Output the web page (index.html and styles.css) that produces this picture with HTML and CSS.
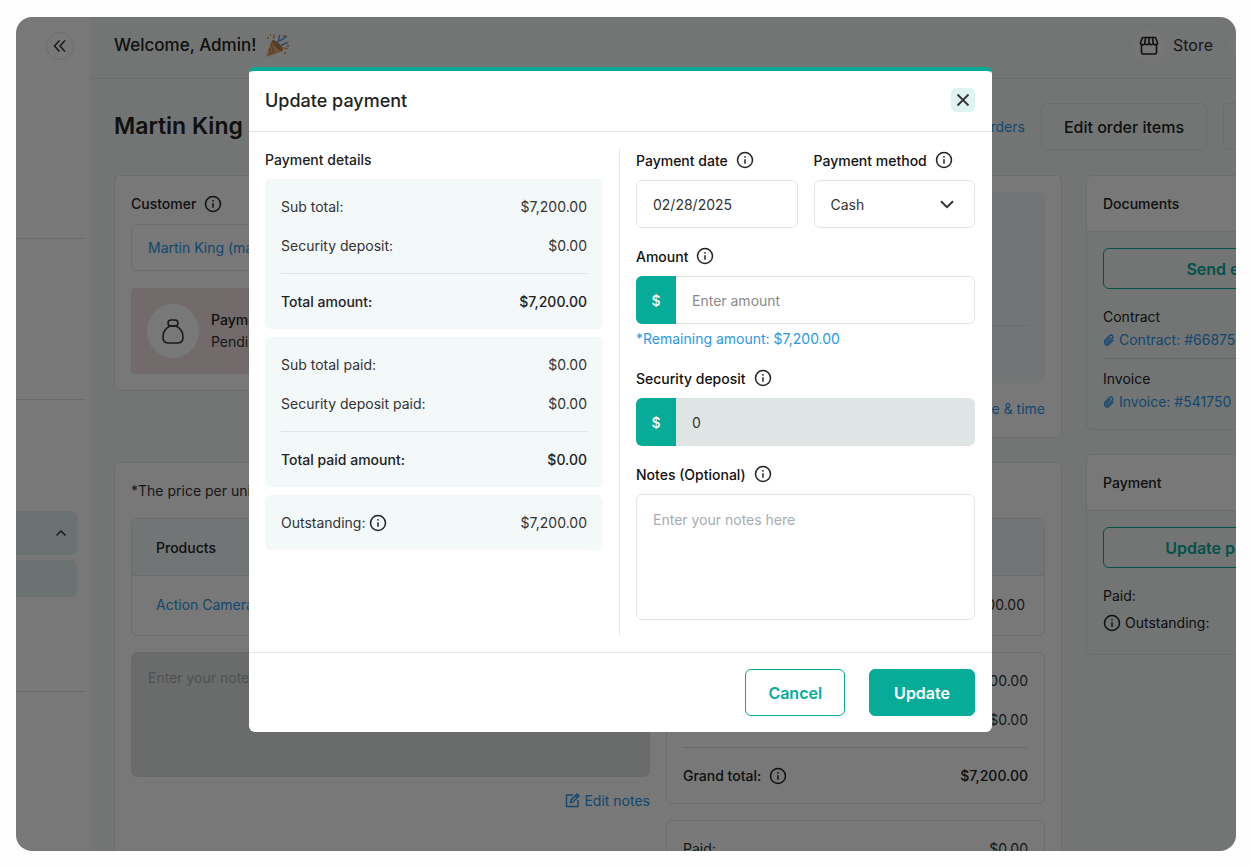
FILE: index.html
```
<!DOCTYPE html>
<html lang="en">
<head>
	<meta charset="UTF-8">
	<title>Update payment</title>
	<link rel="stylesheet" href="styles.css">
</head>
<body>
	<!-- shared icons -->
	<svg class="sprite" aria-hidden="true">
		<symbol id="info" viewBox="0 0 24 24">
			<circle cx="12" cy="12" r="10" fill="none" stroke="currentColor" stroke-width="2"/>
			<path d="M12 11v6" fill="none" stroke="currentColor" stroke-width="2"/>
			<circle cx="12" cy="7.8" r="1.2" fill="currentColor"/>
		</symbol>
		<symbol id="clip" viewBox="0 0 24 24">
			<path d="M21 11.5l-8.6 8.6a5.6 5.6 0 0 1-8-8l9-9a3.9 3.9 0 0 1 5.500 5.500l-8.800 8.800a2 2 0 0 1-2.900-2.900l8-8" fill="none" stroke="currentColor" stroke-width="2.600"/>
		</symbol>
	</svg>

	<div class="app">
		<aside class="sidebar">
			<div class="side-top">
				<button type="button" class="collapse" aria-label="Collapse menu">
					<svg width="14" height="14" viewBox="0 0 14 14"><path d="M6.500 1.500L1.500 7l5 5.500M12 1.500L7 7l5 5.500" fill="none" stroke="currentColor" stroke-width="1.500"/></svg>
				</button>
			</div>
			<div class="side-group"></div>
			<div class="side-group last">
				<a href="#" class="side-item open" aria-label="Orders">
					<svg width="12" height="8" viewBox="0 0 12 8"><path d="M1.500 6.500L6 2l4.500 4.500" fill="none" stroke="currentColor" stroke-width="1.500"/></svg>
				</a>
				<a href="#" class="side-item" aria-label="All orders"></a>
			</div>
		</aside>

		<div class="main">
			<header class="topbar">
				<span class="welcome">Welcome, Admin!</span>
				<svg width="26" height="26" viewBox="0 0 26 26">
					<path d="M8 7l11 11L2 24z" fill="#e8b07a"/>
					<path d="M7 10l3 11M5 15l2 7" stroke="#c48a52" stroke-width="1.500" fill="none"/>
					<ellipse cx="13.500" cy="12.500" rx="2.500" ry="7.500" transform="rotate(-45 13.500 12.500)" fill="#b98250"/>
					<path d="M13 10c3-2 1-5 3-8M17 13c2-3 4-1 7-4M14 8c4 0 5-3 9-5" stroke="#5b9fd6" stroke-width="1.500" fill="none"/>
					<path d="M17 15c3-1 4 2 7 0M10 6c-1-2 1-3 0-5" stroke="#e0a064" stroke-width="1.500" fill="none"/>
					<path d="M3 4h2v2H3zM19 2h2v2h-2zM23 12h2v2h-2zM20 19h2v2h-2zM6 1h1v2H6z" fill="#e0a064"/>
				</svg>
				<div class="store">
					<span class="round">
						<svg width="20" height="20" viewBox="0 0 20 20" fill="none" stroke="#222" stroke-width="1.600" stroke-linejoin="round">
							<path d="M2.500 8.500v8a1.500 1.500 0 0 0 1.500 1.500h12a1.500 1.500 0 0 0 1.500-1.500v-8M3.500 1.500h13l2 5a2.100 2.100 0 0 1-4.200.500a2.200 2.200 0 0 1-4.300 0a2.200 2.200 0 0 1-4.300 0A2.100 2.100 0 0 1 1.500 6.500zM6.700 1.500l-1 5.500M10 1.500V7M13.300 1.500l1 5.500"/>
						</svg>
					</span>
					Store
				</div>
				<span class="round"></span>
			</header>

			<div class="content">
				<div class="title-row">
					<h1>Martin King</h1>
					<a href="#" class="back">Back to orders</a>
					<button type="button" class="btn-plain">Edit order items</button>
					<button type="button" class="btn-plain more" aria-label="More"></button>
				</div>

				<div class="columns">
					<div class="left">
						<div class="cards">
							<section class="card customer">
								<h2>Customer <svg class="icon"><use href="#info"/></svg></h2>
								<a href="#" class="person">Martin King (martin)</a>
								<div class="status">
									<span class="status-icon">
										<svg width="24" height="28" viewBox="0 0 24 28" fill="none" stroke="#333" stroke-width="1.600">
											<rect x="7" y="3" width="10" height="6" rx="3"/>
											<path d="M9 9C5 11 2 15 2 20c0 4 2 6 5 6h10c3 0 5-2 5-6c0-5-3-9-7-11z"/>
										</svg>
									</span>
									<div><b>Payment</b><br>Pending</div>
								</div>
							</section>
							<section class="card dates">
								<div class="panel"><div class="panel-line"></div></div>
								<a href="#">Edit date &amp; time</a>
							</section>
						</div>

						<section class="card order">
							<p class="price-note">*The price per unit</p>
							<table>
								<thead><tr><th>Products</th><th></th></tr></thead>
								<tbody><tr><td><a href="#">Action Camera</a></td><td class="num">$7,200.00</td></tr></tbody>
							</table>
							<div class="bottom">
								<div class="notes-col">
									<textarea class="order-notes" aria-label="Order notes" placeholder="Enter your notes here" disabled></textarea>
									<a href="#" class="edit-notes">
										<svg width="15" height="15" viewBox="0 0 15 15" fill="none" stroke="currentColor" stroke-width="1.400"><path d="M8 2H1.500v11.500H13V7M5.500 9.500l.600-2.600L12 1l2 2-5.900 5.900zM10.500 2.500l2 2"/></svg>
										Edit notes
									</a>
								</div>
								<div class="totals-col">
									<div class="totals">
										<div class="row"><span>Sub total:</span><span>$7,200.00</span></div>
										<div class="row"><span>Security deposit:</span><span>$0.00</span></div>
										<div class="row total strong"><span>Grand total: <svg class="icon"><use href="#info"/></svg></span><span>$7,200.00</span></div>
									</div>
									<div class="totals">
										<div class="row"><span>Paid:</span><span>$0.00</span></div>
									</div>
								</div>
							</div>
						</section>
					</div>

					<div class="right">
						<section class="side-card">
							<h2>Documents</h2>
							<div class="side-body">
								<button type="button" class="btn-outline small">Send email</button>
								<div class="doc">
									<p>Contract</p>
									<a href="#"><svg class="clip"><use href="#clip"/></svg>Contract: #668756</a>
								</div>
								<div class="doc">
									<p>Invoice</p>
									<a href="#"><svg class="clip"><use href="#clip"/></svg>Invoice: #541750</a>
								</div>
							</div>
						</section>
						<section class="side-card">
							<h2>Payment</h2>
							<div class="side-body">
								<button type="button" class="btn-outline small">Update payment</button>
								<div class="paid">
									<p>Paid:</p>
									<p class="out"><svg class="icon"><use href="#info"/></svg>Outstanding:</p>
								</div>
							</div>
						</section>
					</div>
				</div>
			</div>
		</div>

		<div class="overlay">
			<form class="modal" role="dialog" aria-labelledby="modal-title">
				<div class="modal-head">
					<h2 id="modal-title">Update payment</h2>
					<button type="button" class="close" aria-label="Close">
						<svg width="14" height="14" viewBox="0 0 14 14"><path d="M1.500 1.500l11 11M12.500 1.500l-11 11" stroke="currentColor" stroke-width="1.800"/></svg>
					</button>
				</div>
				<div class="modal-body">
					<div class="details">
						<h3>Payment details</h3>
						<div class="box">
							<div class="row"><span>Sub total:</span><span>$7,200.00</span></div>
							<div class="row"><span>Security deposit:</span><span>$0.00</span></div>
							<div class="row total"><span>Total amount:</span><span>$7,200.00</span></div>
						</div>
						<div class="box">
							<div class="row"><span>Sub total paid:</span><span>$0.00</span></div>
							<div class="row"><span>Security deposit paid:</span><span>$0.00</span></div>
							<div class="row total"><span>Total paid amount:</span><span>$0.00</span></div>
						</div>
						<div class="box">
							<div class="row"><span class="tight">Outstanding: <svg class="icon"><use href="#info"/></svg></span><span>$7,200.00</span></div>
						</div>
					</div>
					<div class="fields">
						<div class="two">
							<div class="field">
								<label for="pdate">Payment date <svg class="icon"><use href="#info"/></svg></label>
								<input type="text" id="pdate" value="02/28/2025">
							</div>
							<div class="field">
								<label for="pmethod">Payment method <svg class="icon"><use href="#info"/></svg></label>
								<div class="select">
									<select id="pmethod"><option>Cash</option></select>
									<svg class="arrow" width="14" height="9" viewBox="0 0 14 9"><path d="M1 1.200l6 6 6-6" fill="none" stroke="currentColor" stroke-width="2"/></svg>
								</div>
							</div>
						</div>
						<div class="field">
							<label for="amount">Amount <svg class="icon"><use href="#info"/></svg></label>
							<div class="money"><span>$</span><input type="text" id="amount" placeholder="Enter amount"></div>
							<p class="hint">*Remaining amount: $7,200.00</p>
						</div>
						<div class="field">
							<label for="deposit">Security deposit <svg class="icon"><use href="#info"/></svg></label>
							<div class="money"><span>$</span><input type="text" id="deposit" value="0" disabled></div>
						</div>
						<div class="field">
							<label for="notes">Notes (Optional) <svg class="icon"><use href="#info"/></svg></label>
							<textarea id="notes" placeholder="Enter your notes here"></textarea>
						</div>
					</div>
				</div>
				<div class="modal-foot">
					<button type="button" class="btn-outline">Cancel</button>
					<button type="submit" class="btn-fill">Update</button>
				</div>
			</form>
		</div>
	</div>
</body>
</html>
```
FILE: styles.css
```
*{
	box-sizing: border-box;
}
body{
	margin: 0;
	padding: 17px 16px 16px;
	background-color: #fefefe;
	color: #333;
	font-family: Inter, "Liberation Sans", sans-serif;
	font-size: 14px;
	line-height: 23px;
}
h1, h2, h3, p{
	margin: 0;
}
a{
	color: #2b97e8;
	text-decoration: none;
}
button, input, select, textarea{
	font-family: inherit;
	font-size: 14px;
	color: #333;
}
button{
	cursor: pointer;
}
.sprite{
	display: none;
}
.icon{
	width: 18px;
	height: 18px;
	flex: none;
	color: #222;
}
.app{
	position: relative;
	display: flex;
	height: calc(100vh - 33px);
	border-radius: 16px;
	overflow: hidden;
	background-color: #f4f9f8;
}

/* sidebar */
.sidebar{
	flex: none;
	width: 74px;
	background-color: #fff;
}
.side-top, .side-group{
	margin-right: 5px;
	border-bottom: 1px solid #dfe5e4;
}
.side-top{
	display: flex;
	justify-content: flex-end;
	align-items: flex-start;
	height: 222px;
	padding: 15px 11px;
}
.side-group{
	height: 161px;
}
.side-group.last{
	height: 292px;
	padding: 111px 8px 0 0;
}
.collapse{
	display: flex;
	align-items: center;
	justify-content: center;
	width: 28px;
	height: 28px;
	padding: 0;
	border: 1px solid #e6e6e6;
	border-radius: 50%;
	background: none;
}
.side-item{
	display: flex;
	align-items: center;
	justify-content: flex-end;
	height: 37px;
	padding-right: 10px;
	border-radius: 0 6px 6px 0;
	background-color: #e0f2f0;
	color: #333;
}
.side-item.open{
	height: 44px;
	margin-bottom: 5px;
}

/* top bar */
.main{
	flex: 1;
	min-width: 0;
}
.topbar{
	display: flex;
	align-items: center;
	height: 62px;
	padding-left: 24px;
	padding-bottom: 4px;
	border-bottom: 1px solid #e2eae9;
}
.welcome{
	margin-right: 8px;
	font-size: 17px;
	font-weight: 500;
	color: #222;
}
.store{
	display: flex;
	align-items: center;
	gap: 8px;
	margin-left: auto;
	margin-right: 16px;
	font-size: 16px;
}
.round{
	display: flex;
	align-items: center;
	justify-content: center;
	flex: none;
	width: 32px;
	height: 32px;
	border-radius: 50%;
	background-color: #fafafa;
}
.topbar > .round{
	margin-right: -25px;
}

/* order page, runs past the right edge */
.content{
	margin-right: -136px;
	padding: 24px 0 0 24px;
}
.title-row{
	display: flex;
	align-items: center;
	gap: 16px;
	margin-bottom: 25px;
}
.title-row h1{
	font-size: 23px;
	font-weight: 600;
	color: #222;
}
.back{
	margin-left: auto;
}
.btn-plain{
	height: 47px;
	padding: 0 22px;
	border: 1px solid #dfe7e6;
	border-radius: 6px;
	background: none;
	font-size: 16px;
	font-weight: 500;
	color: #222;
}
.btn-plain.more{
	width: 149px;
}
.columns{
	display: grid;
	grid-template-columns: minmax(0, 1fr) 286px;
	gap: 24px;
}
.cards{
	display: grid;
	grid-template-columns: 1fr 1fr;
	gap: 24px;
	align-items: start;
	margin-bottom: 24px;
}
.card{
	padding: 16px;
	border: 1px solid #e0e7e6;
	border-radius: 6px;
	background-color: #fff;
}
.card h2, .side-card h2{
	display: flex;
	align-items: center;
	gap: 8px;
	font-size: 14px;
	font-weight: 500;
	color: #222;
}
.customer{
	height: 216px;
}
.person{
	display: block;
	margin: 9px 0 17px;
	padding: 11px 16px;
	border: 1px solid #e0e7e6;
	border-radius: 6px;
}
.status{
	display: flex;
	align-items: center;
	gap: 12px;
	padding: 16px;
	border-radius: 4px;
	background-color: #f4e4e3;
	line-height: 22px;
}
.status b{
	font-weight: 500;
	color: #222;
}
.status-icon{
	display: flex;
	align-items: center;
	justify-content: center;
	width: 52px;
	height: 54px;
	border-radius: 50%;
	background-color: #fff;
}
.dates{
	height: 263px;
	text-align: right;
}
.panel{
	height: 189px;
	margin-bottom: 16px;
	padding: 133px 16px 0;
	border-radius: 6px;
	background-color: #f3f8f8;
}
.panel-line{
	border-top: 1px solid #dfe5e4;
}
.price-note{
	margin-bottom: 16px;
}
.order table{
	width: 100%;
	margin-bottom: 16px;
	border: 1px solid #e0e7e6;
	border-radius: 6px;
	border-spacing: 0;
}
.order th, .order td{
	height: 57px;
	padding: 0 24px;
	text-align: left;
}
.order td{
	height: 59px;
	padding-bottom: 3px;
}
.order th{
	border-bottom: 1px solid #e0e7e6;
	background-color: #f3f8f8;
	font-weight: 500;
	color: #222;
}
.order .num{
	padding-right: 19px;
	text-align: right;
}
.bottom{
	display: flex;
	gap: 16px;
}
.notes-col{
	flex: 1;
	text-align: right;
}
.order-notes{
	display: block;
	width: 100%;
	height: 125px;
	margin-bottom: 12px;
	padding: 16px;
	border: 1px solid #dde4e4;
	border-radius: 6px;
	background-color: #dfe5e4;
	resize: none;
}
textarea::placeholder{
	color: #a6adb2;
}
.edit-notes{
	display: inline-flex;
	align-items: center;
	gap: 4px;
}
.totals-col{
	width: 379px;
}
.totals{
	margin-bottom: 16px;
	padding: 16px;
	border: 1px solid #e0e7e6;
	border-radius: 6px;
}
.row{
	display: flex;
	justify-content: space-between;
}
.row > span{
	display: flex;
	align-items: center;
	gap: 8px;
}
.row > .tight{
	gap: 4px;
}
.row + .row{
	margin-top: 16px;
}
.row.total{
	padding-top: 16px;
	border-top: 1px solid #dfe5e5;
	font-weight: 500;
	color: #222;
}

/* right column */
.side-card{
	margin-bottom: 24px;
	border: 1px solid #dfe7e6;
	border-radius: 6px;
	overflow: hidden;
}
.side-card h2{
	height: 56px;
	padding: 0 16px;
	border-bottom: 1px solid #dfe7e6;
	background-color: #fff;
}
.side-body{
	padding: 16px;
}
.side-body p{
	color: #222;
}
.doc{
	padding: 16px 0 7px;
}
.doc + .doc{
	padding: 8px 0 0;
	border-top: 1px solid #d5dcdb;
}
.doc a{
	display: flex;
	align-items: center;
	gap: 4px;
}
.clip{
	width: 12px;
	height: 12px;
}
.paid{
	padding-top: 16px;
}
.out{
	display: flex;
	align-items: center;
	gap: 4px;
	padding: 4px 0;
}
.btn-outline, .btn-fill{
	height: 47px;
	padding: 0 22px;
	border: 1px solid #07ac98;
	border-radius: 6px;
	background: none;
	font-size: 16px;
	font-weight: 600;
	color: #07ac98;
}
.btn-fill{
	padding: 0 24px;
	background-color: #07ac98;
	color: #fff;
}
.btn-outline.small{
	width: 100%;
	height: 41px;
}

/* modal */
.overlay{
	position: absolute;
	inset: 0;
	padding: 50px 11px 0 0;
	background-color: rgba(0, 0, 0, .53);
}
.modal{
	width: 743px;
	max-width: 100%;
	margin: 0 auto;
	border-top: 4px solid #07ac98;
	border-radius: 6px;
	background-color: #fff;
}
.modal-head{
	display: flex;
	align-items: center;
	justify-content: space-between;
	height: 61px;
	padding: 0 17px 2px 16px;
	border-bottom: 1px solid #e3e7e7;
}
.modal-head h2{
	font-size: 18px;
	font-weight: 500;
	color: #222;
}
.close{
	display: flex;
	align-items: center;
	justify-content: center;
	width: 24px;
	height: 24px;
	padding: 0;
	border: 0;
	border-radius: 5px;
	background-color: #dff3f1;
}
.modal-body{
	display: grid;
	grid-template-columns: 1fr 1fr;
	padding: 16px 17px 16px 16px;
}
.details{
	padding-right: 16px;
	border-right: 1px solid #e3e7e7;
}
.details h3{
	margin-bottom: 8px;
	font-size: 14px;
	font-weight: 500;
	color: #222;
}
.box{
	margin-bottom: 8px;
	padding: 16px;
	border-radius: 6px;
	background-color: #f3f8f9;
}
.fields{
	display: grid;
	gap: 16px;
	padding: 0 0 16px 16px;
}
.two{
	display: grid;
	grid-template-columns: 1fr 1fr;
	gap: 16px;
}
.field label{
	display: flex;
	align-items: center;
	gap: 8px;
	height: 24px;
	margin-bottom: 8px;
	font-weight: 500;
	color: #111;
}
.field input, .field select, .field textarea{
	display: block;
	width: 100%;
	height: 48px;
	padding: 0 16px;
	border: 1px solid #dfe7e6;
	border-radius: 6px;
	background-color: #fff;
}
.field select{
	appearance: none;
}
.field input::placeholder{
	color: #8a8a8a;
}
.field textarea{
	height: 126px;
	padding: 16px;
	resize: none;
}
.select{
	position: relative;
}
.arrow{
	position: absolute;
	top: 20px;
	right: 21px;
	pointer-events: none;
}
.money{
	display: flex;
}
.money span{
	display: flex;
	align-items: center;
	justify-content: center;
	flex: none;
	width: 40px;
	border-radius: 6px 0 0 6px;
	background-color: #07ac98;
	font-weight: 500;
	color: #fff;
}
.field .money input{
	border-left: 0;
	border-radius: 0 6px 6px 0;
}
.field input:disabled{
	background-color: #dfe5e4;
}
.hint{
	margin-top: 4px;
	line-height: 22px;
	color: #2b97e8;
}
.modal-foot{
	display: flex;
	justify-content: flex-end;
	gap: 24px;
	padding: 16px 17px;
	border-top: 1px solid #e0eceb;
}
```
